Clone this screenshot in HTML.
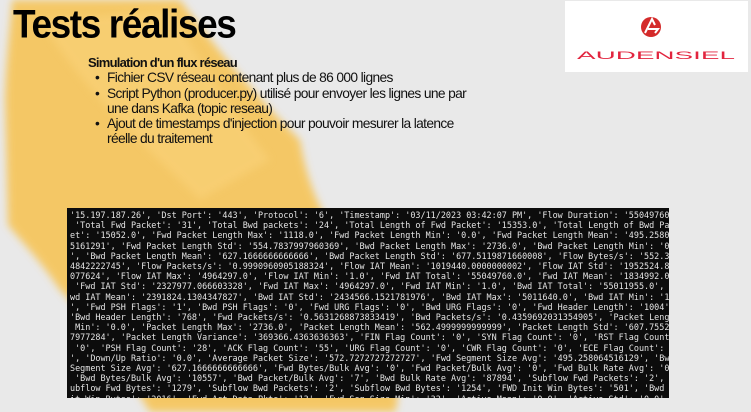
<!DOCTYPE html>
<html><head><meta charset="utf-8"><style>
*{margin:0;padding:0}
body{width:751px;height:412px;overflow:hidden;background:#e9e9e9;position:relative;font-family:"Liberation Sans",sans-serif}
.t{position:absolute;left:13px;top:2px;font-size:37px;font-weight:bold;letter-spacing:-1.4px;color:#000;transform:scaleY(1.08);transform-origin:top left}
.b{position:absolute;left:88px;top:55px;font-size:13.8px;line-height:15.3px;color:#111;letter-spacing:-0.65px}
.b .h{font-weight:bold;font-size:13px;letter-spacing:-0.75px}
.b ul{margin-left:19px;list-style:none}
.b li{position:relative;width:420px}
.b li:before{content:"•";position:absolute;left:-12px}
.term{position:absolute;left:67px;top:208px;width:602px;height:190px;background:#0c0c0c;overflow:hidden}
.term pre{font-family:"DejaVu Sans Mono","Liberation Mono",monospace;font-size:8.45px;line-height:10.2px;color:#e4e4e4;margin:2px 0 0 3px;white-space:pre}
.logo{position:absolute;left:565px;top:1px;width:183px;height:71px;background:#fff}
</style></head><body>
<svg width="751" height="412" style="position:absolute;left:0;top:0">
<defs><filter id="bl"><feGaussianBlur stdDeviation="4"/></filter></defs>
<path filter="url(#bl)" fill="#f7c250" opacity="0.85" d="M12,0 L180,0 C210,40 250,90 300,140 C310,200 330,230 380,300 C400,360 400,400 395,412 L150,412 C130,380 100,330 60,290 C40,260 20,240 8,225 L5,100 C6,60 10,30 12,0Z"/>
<path filter="url(#bl)" fill="#fad37a" opacity="0.6" d="M40,20 L170,10 C200,60 230,110 270,160 L200,200 C150,150 90,100 40,20Z"/>
</svg>
<div class="t">Tests réalises</div>
<div class="b"><div class="h">Simulation d'un flux réseau</div>
<ul><li>Fichier CSV réseau contenant plus de 86 000 lignes</li>
<li>Script Python (producer.py) utilisé pour envoyer les lignes une par<br>une dans Kafka (topic reseau)</li>
<li>Ajout de timestamps d'injection pour pouvoir mesurer la latence<br>réelle du traitement</li></ul></div>
<div class="term"><pre>'15.197.187.26', 'Dst Port': '443', 'Protocol': '6', 'Timestamp': '03/11/2023 03:42:07 PM', 'Flow Duration': '55049760
 'Total Fwd Packet': '31', 'Total Bwd packets': '24', 'Total Length of Fwd Packet': '15353.0', 'Total Length of Bwd Pa
et': '15052.0', 'Fwd Packet Length Max': '1118.0', 'Fwd Packet Length Min': '0.0', 'Fwd Packet Length Mean': '495.2580
5161291', 'Fwd Packet Length Std': '554.7837997960369', 'Bwd Packet Length Max': '2736.0', 'Bwd Packet Length Min': '0
', 'Bwd Packet Length Mean': '627.1666666666666', 'Bwd Packet Length Std': '677.5119871660008', 'Flow Bytes/s': '552.3
4842222745', 'Flow Packets/s': '0.9990960905188324', 'Flow IAT Mean': '1019440.0000000002', 'Flow IAT Std': '1952524.8
077624', 'Flow IAT Max': '4964297.0', 'Flow IAT Min': '1.0', 'Fwd IAT Total': '55049760.0', 'Fwd IAT Mean': '1834992.0
 'Fwd IAT Std': '2327977.066603328', 'Fwd IAT Max': '4964297.0', 'Fwd IAT Min': '1.0', 'Bwd IAT Total': '55011955.0',
wd IAT Mean': '2391824.1304347827', 'Bwd IAT Std': '2434566.1521781976', 'Bwd IAT Max': '5011640.0', 'Bwd IAT Min': '1
', 'Fwd PSH Flags': '1', 'Bwd PSH Flags': '0', 'Fwd URG Flags': '0', 'Bwd URG Flags': '0', 'Fwd Header Length': '1004'
'Bwd Header Length': '768', 'Fwd Packets/s': '0.5631268873833419', 'Bwd Packets/s': '0.4359692031354905', 'Packet Leng
 Min': '0.0', 'Packet Length Max': '2736.0', 'Packet Length Mean': '562.4999999999999', 'Packet Length Std': '607.7552
7977284', 'Packet Length Variance': '369366.4363636363', 'FIN Flag Count': '0', 'SYN Flag Count': '0', 'RST Flag Count
 '0', 'PSH Flag Count': '28', 'ACK Flag Count': '55', 'URG Flag Count': '0', 'CWR Flag Count': '0', 'ECE Flag Count':
', 'Down/Up Ratio': '0.0', 'Average Packet Size': '572.7272727272727', 'Fwd Segment Size Avg': '495.258064516129', 'Bw
Segment Size Avg': '627.1666666666666', 'Fwd Bytes/Bulk Avg': '0', 'Fwd Packet/Bulk Avg': '0', 'Fwd Bulk Rate Avg': '0
 'Bwd Bytes/Bulk Avg': '10557', 'Bwd Packet/Bulk Avg': '7', 'Bwd Bulk Rate Avg': '87894', 'Subflow Fwd Packets': '2',
ubflow Fwd Bytes': '1279', 'Subflow Bwd Packets': '2', 'Subflow Bwd Bytes': '1254', 'FWD Init Win Bytes': '501', 'Bwd
it Win Bytes': '2016', 'Fwd Act Data Pkts': '13', 'Fwd Seg Size Min': '32', 'Active Mean': '0.0', 'Active Std': '0.0'</pre></div>
<div class="logo">
<svg width="183" height="71">
<circle cx="86" cy="26" r="10" fill="#d42a2a"/>
<path d="M80,32 L87,18 L90,24 M83,28 L93,28 L90,32" stroke="#fff" stroke-width="2" fill="none"/>
<text x="91" y="58" text-anchor="middle" font-family="Liberation Sans" font-size="11" fill="#e2253f" textLength="158" lengthAdjust="spacingAndGlyphs">AUDENSIEL</text>
</svg></div>
</body></html>
